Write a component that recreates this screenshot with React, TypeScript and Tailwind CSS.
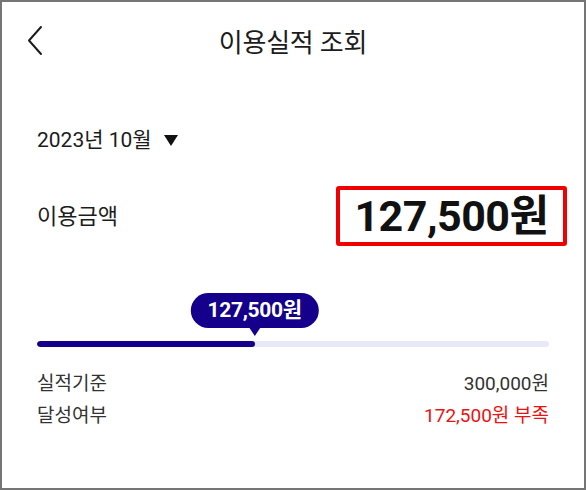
import React from 'react';

const font = { fontFamily: "Roboto, 'Noto Sans CJK KR', sans-serif" };

export default function App() {
  const used = 127500;
  const target = 300000;
  const pct = (used / target) * 100;

  return (
    <div className="w-[586px] h-[490px] bg-white border-2 border-[#757575] overflow-hidden text-[#1c1c1c]" style={font}>
      {/* header */}
      <div className="relative h-[82px] flex items-center justify-center">
        <svg className="absolute left-[24px] top-[23px]" width="18" height="31" viewBox="0 0 18 31" fill="none">
          <path d="M15 2 L3 15.5 L15 29" stroke="#1c1c1c" strokeWidth="2" strokeLinecap="round" strokeLinejoin="round" />
        </svg>
        <h1 className="text-[26px] text-[#1c1c1c] tracking-[-0.2px]">이용실적 조회</h1>
      </div>

      <div className="px-[35px]">
        {/* month selector */}
        <div className="mt-[40px] flex items-center gap-[12px] h-[34px]">
          <span className="text-[21px]">2023년 10월</span>
          <svg width="14" height="12" viewBox="0 0 14 12">
            <path d="M0 0 H14 L7 11 Z" fill="#111" />
          </svg>
        </div>

        {/* amount */}
        <div className="mt-[26px] flex items-center justify-between h-[64px]">
          <span className="text-[22px]">이용금액</span>
          <div className="mr-[-18px] border-4 border-[#f00000] rounded-[3px] w-[231px] h-[60px] flex items-center justify-center">
            <span className="text-[43px] font-bold tracking-[-0.5px] text-[#111]">127,500원</span>
          </div>
        </div>

        {/* progress */}
        <div className="mt-[45px] relative">
          <div className="h-[42px]" />
          <div
            className="absolute top-0 flex flex-col items-center -translate-x-1/2"
            style={{ left: `${pct}%` }}
          >
            <div className="h-[35px] px-[17px] rounded-full bg-[#14008a] flex items-center">
              <span className="text-white text-[21px] font-bold tracking-[-0.3px]">127,500원</span>
            </div>
            <svg width="12" height="9" viewBox="0 0 12 9" className="-mt-px">
              <path d="M0 0 H12 L6 9 Z" fill="#14008a" />
            </svg>
          </div>
          <div className="h-[6px] rounded-full bg-[#e7eaf6] mt-[6px] overflow-hidden">
            <div className="h-full rounded-full bg-[#14008a]" style={{ width: `${pct}%` }} />
          </div>
        </div>

        {/* rows */}
        <div className="mt-[25px] flex flex-col gap-[8px] text-[19px] text-[#333]">
          <div className="flex justify-between h-[24px] items-center">
            <span>실적기준</span>
            <span>300,000원</span>
          </div>
          <div className="flex justify-between h-[24px] items-center">
            <span>달성여부</span>
            <span className="text-[#ee1111]">172,500원 부족</span>
          </div>
        </div>
      </div>
    </div>
  );
}
